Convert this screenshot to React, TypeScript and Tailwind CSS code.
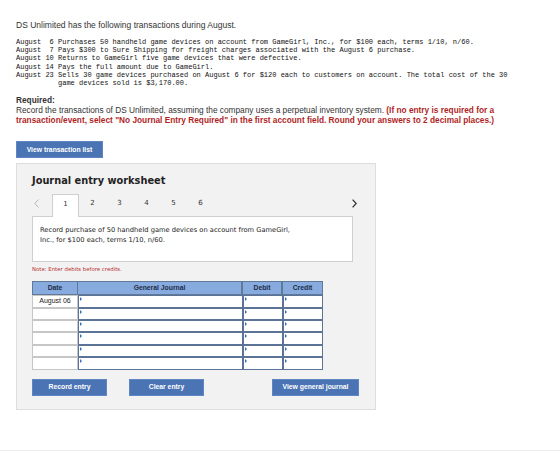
const transactions = [
  ['August  6', 'Purchases 50 handheld game devices on account from GameGirl, Inc., for $100 each, terms 1/10, n/60.'],
  ['August  7', 'Pays $300 to Sure Shipping for freight charges associated with the August 6 purchase.'],
  ['August 10', 'Returns to GameGirl five game devices that were defective.'],
  ['August 14', 'Pays the full amount due to GameGirl.'],
  ['August 23', 'Sells 30 game devices purchased on August 6 for $120 each to customers on account. The total cost of the 30 game devices sold is $3,170.00.'],
]

const tabs = ['1', '2', '3', '4', '5', '6']

function InputCell({ w }: { w: string }) {
  return (
    <div className={`relative ${w} h-full border border-[#5b7397] bg-white`}>
      <span className="absolute left-[1px] top-[1px] w-0 h-0 border-t-[2px] border-b-[2px] border-l-[2px] border-t-transparent border-b-transparent border-l-[#3b6cc0]" />
    </div>
  )
}

export default function App() {
  const rows = ['August 06', '', '', '', '', '']

  return (
    <div className="w-[560px] h-[454px] bg-white overflow-hidden font-['Liberation_Sans',Arial,sans-serif] text-[#333]">
      <div className="px-4 pt-[20px]">
        <p className="text-[8.5px] leading-[10px] text-[#333]">
          DS Unlimited has the following transactions during August.
        </p>

        <div className="mt-[8px] font-['Liberation_Mono','Courier_New',monospace] text-[7px] leading-[8.2px] text-[#111]">
          {transactions.map(([date, text]) => (
            <div key={date} className="flex">
              <span className="w-[42px] shrink-0 whitespace-pre">{date}</span>
              <span className="w-[455px]">{text}</span>
            </div>
          ))}
        </div>

        <p className="mt-[8px] text-[8.3px] leading-[10px] font-bold text-[#333]">Required:</p>
        <p className="text-[8.3px] leading-[10px] text-[#333]">
          Record the transactions of DS Unlimited, assuming the company uses a perpetual inventory system.{' '}
          <span className="font-bold text-[#b01f1f]">
            (If no entry is required for a transaction/event, select "No Journal Entry Required" in the first account field. Round your answers to 2 decimal places.)
          </span>
        </p>

        <button className="mt-[16px] w-[87px] h-[17px] bg-[#4a74b4] border border-[#5e86c2] text-white text-[6.8px] font-bold flex items-center justify-center">
          View transaction list
        </button>

        <div className="mt-[5px] w-[360px] bg-[#f2f2f2] border border-[#dedede] pl-[15px] pt-[11px] pb-[13px]">
          <h2 className="font-['DejaVu_Sans',Verdana,sans-serif] font-bold text-[9.8px] leading-[12px] text-[#222]">
            Journal entry worksheet
          </h2>

          <div className="mt-[7px] w-[325px] h-[22px] flex items-start justify-between font-['DejaVu_Sans',Verdana,sans-serif]">
            <div className="flex">
              <div className="w-[20px] h-[22px] flex items-center pl-[2px] pb-[4px]">
                <svg width="5" height="9" viewBox="0 0 5 9" fill="none" stroke="#b5b5b5" strokeWidth="1">
                  <path d="M4.5 0.5 L0.8 4.5 L4.5 8.5" />
                </svg>
              </div>
              {tabs.map((t, i) => (
                <div
                  key={t}
                  className={`w-[27px] h-[23px] flex justify-center pt-[5px] text-[7px] leading-[9px] text-[#333] ${
                    i === 0 ? 'bg-white border border-b-0 border-[#cfcfcf] relative z-10' : ''
                  }`}
                >
                  {t}
                </div>
              ))}
            </div>
            <div className="h-[22px] flex items-center pb-[4px]">
              <svg width="5" height="9" viewBox="0 0 5 9" fill="none" stroke="#333" strokeWidth="1.3">
                <path d="M0.6 0.6 L4.2 4.5 L0.6 8.4" />
              </svg>
            </div>
          </div>

          <div className="w-[321px] h-[46px] bg-white border border-[#cfcfcf] pl-[7px] pt-[8px] font-['DejaVu_Sans',Verdana,sans-serif] text-[6.7px] leading-[10px] text-[#222]">
            Record purchase of 50 handheld game devices on account from GameGirl,
            <br />
            Inc., for $100 each, terms 1/10, n/60.
          </div>

          <p className="mt-[4px] font-['DejaVu_Sans',Verdana,sans-serif] text-[5.4px] leading-[7px] text-[#b83232]">
            Note: Enter debits before credits.
          </p>

          <div className="mt-[8px] w-[291px] text-[6.8px]">
            <div className="flex h-[14px] bg-[#87abdf] border border-[#617998] font-bold text-[#1f2d47]">
              <div className="w-[45px] flex items-center justify-center border-r border-[#617998]">Date</div>
              <div className="w-[165px] flex items-center justify-center border-r-2 border-[#617998]">General Journal</div>
              <div className="w-[40px] flex items-center justify-center border-r-2 border-[#617998]">Debit</div>
              <div className="flex-1 flex items-center justify-center">Credit</div>
            </div>
            {rows.map((d, i) => (
              <div key={i} className="flex h-[12.4px]">
                <div className="w-[46px] h-full border border-[#c6c6c6] bg-white flex items-center justify-center text-[7px] text-[#222]">
                  {d}
                </div>
                <InputCell w="w-[165px]" />
                <InputCell w="w-[40px]" />
                <InputCell w="w-[40px]" />
              </div>
            ))}
          </div>

          <div className="mt-[9px] w-[327px] flex items-center">
            <button className="w-[75px] h-[17px] bg-[#4a74b4] border border-[#5e86c2] text-white text-[6.8px] font-bold">
              Record entry
            </button>
            <button className="ml-[22px] w-[75px] h-[17px] bg-[#4a74b4] border border-[#5e86c2] text-white text-[6.8px] font-bold">
              Clear entry
            </button>
            <button className="ml-auto w-[87px] h-[17px] bg-[#4a74b4] border border-[#5e86c2] text-white text-[6.8px] font-bold">
              View general journal
            </button>
          </div>
        </div>
      </div>
      <div className="mt-[40px] border-t border-[#ececec]" />
    </div>
  )
}
